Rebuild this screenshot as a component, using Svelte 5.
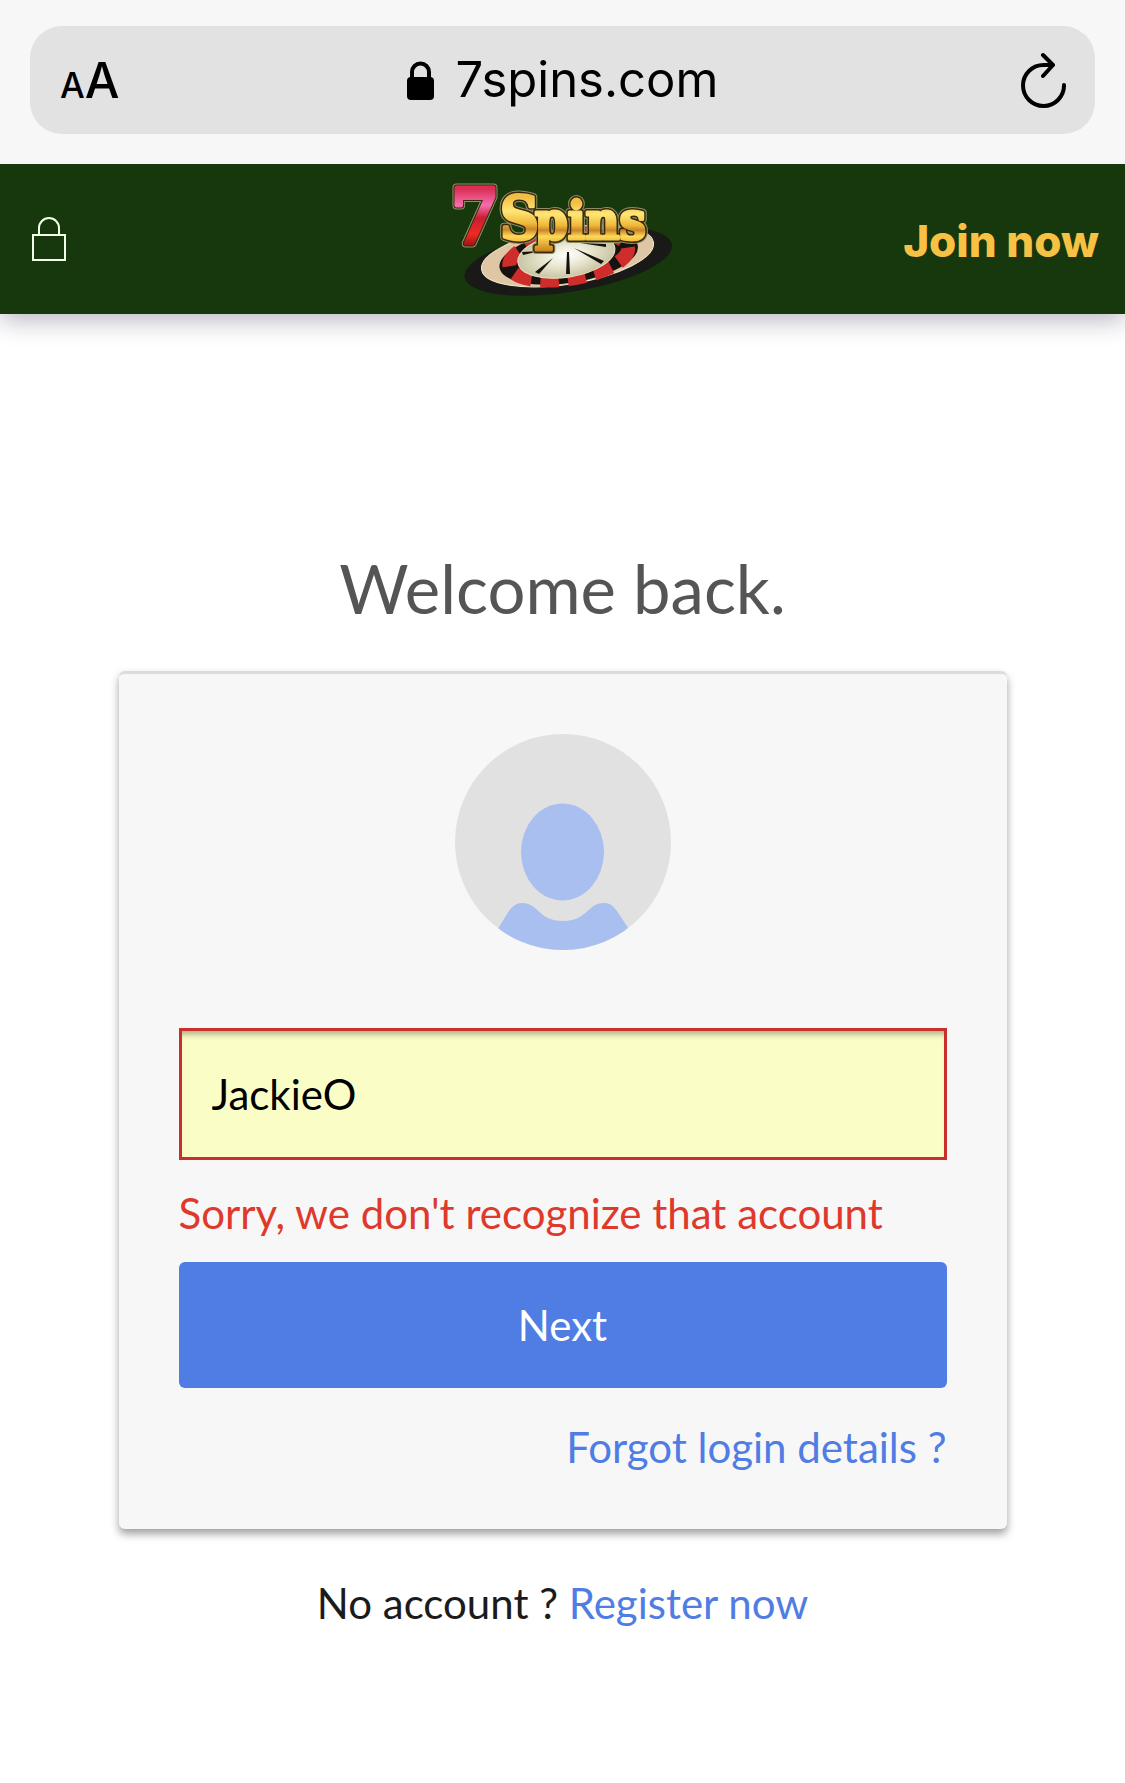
<script>
  let username = $state('JackieO');
</script>

<div class="browser">
  <div class="address">
    <button class="reader" aria-label="Text size"><span class="small">A</span><span>A</span></button>
    <div class="site">
      <svg width="27" height="39" viewBox="0 0 27 39" aria-hidden="true">
        <path d="M5 18V11a8.500 8.500 0 0 1 17 0v7" fill="none" stroke="#000" stroke-width="4" />
        <rect y="16" width="27" height="23" rx="4" />
      </svg>
      <span>7spins.com</span>
    </div>
    <button class="reload" aria-label="Reload">
      <svg width="46" height="56" viewBox="0 0 46 56" fill="none" stroke="#000" stroke-width="4" stroke-linecap="round" stroke-linejoin="round">
        <path d="M32 13H23A20.500 20.500 0 1 0 43 33M22 3 32 13 22 24" />
      </svg>
    </button>
  </div>
</div>

<header>
  <a class="login" href="#login" aria-label="Log in">
    <svg width="34" height="44" viewBox="0 0 34 44" fill="none" stroke="#f2ffe9" stroke-width="2">
      <path d="M1 18H33V43H1ZM7 18V11a10 10 0 0 1 20 0v7" />
    </svg>
  </a>
  <a class="logo" href="#home" aria-label="7Spins">
    <svg width="234" height="142" viewBox="16 4 234 142">
      <defs>
        <linearGradient id="gold" x1="0" y1="0" x2="0" y2="1">
          <stop offset="0.2" stop-color="#f0bd45" />
          <stop offset="0.4" stop-color="#ffe675" />
          <stop offset="0.58" stop-color="#eeb93a" />
          <stop offset="0.66" stop-color="#c9852a" />
          <stop offset="0.76" stop-color="#ffd955" />
          <stop offset="1" stop-color="#c98420" />
        </linearGradient>
        <linearGradient id="seven" x1="0" y1="0" x2="0" y2="1">
          <stop offset="0.2" stop-color="#d92f55" />
          <stop offset="0.38" stop-color="#f56fae" />
          <stop offset="0.52" stop-color="#c81d35" />
          <stop offset="0.7" stop-color="#f02a20" />
          <stop offset="0.84" stop-color="#96101a" />
        </linearGradient>
        <radialGradient id="hub">
          <stop offset="0" stop-color="#ffffff" />
          <stop offset="0.5" stop-color="#e9e6cf" />
          <stop offset="1" stop-color="#c9c4a4" />
        </radialGradient>
      </defs>
      <g transform="rotate(-9 138 95)">
        <ellipse cx="138" cy="97" rx="105" ry="31" fill="#191a18" />
        <ellipse cx="138" cy="92" rx="87" ry="28" fill="#dfc6a4" stroke="#f4e8cd" stroke-width="1" />
        <ellipse cx="139" cy="93" rx="70" ry="26" fill="#17120f" />
        <ellipse cx="139" cy="93" rx="60" ry="22" fill="none" stroke="#cf2c2c" stroke-width="14" pathLength="240" stroke-dasharray="16 8" />
        <ellipse cx="137" cy="91" rx="49" ry="22" fill="url(#hub)" stroke="#efe6c4" stroke-width="1" />
      </g>
      <path d="M137 88 136 110h4L139 88ZM144 84 171 100 174 97ZM123 94 105 108l4 2ZM150 79 176 80v3ZM110 87 92 88l1 3Z" fill="#15120d" />
      <g font-family="DejaVu Serif Condensed, DejaVu Serif, serif" font-weight="700" stroke-linejoin="round" paint-order="stroke">
        <g stroke="#8c9068" stroke-width="8">
          <text x="70" y="75" font-size="60">S</text>
          <text x="105" y="75" font-size="52">pins</text>
          <text x="21" y="79" font-size="77">7</text>
        </g>
        <g stroke="#3b280b" stroke-width="6">
          <text x="70" y="75" font-size="60">S</text>
          <text x="105" y="75" font-size="52">pins</text>
          <text x="21" y="79" font-size="77">7</text>
        </g>
        <g stroke="url(#gold)" stroke-width="3" fill="url(#gold)">
          <text x="70" y="75" font-size="60">S</text>
          <text x="105" y="75" font-size="52">pins</text>
        </g>
        <text x="21" y="79" font-size="77" stroke="url(#seven)" stroke-width="4" fill="url(#seven)">7</text>
      </g>
    </svg>
  </a>
  <a class="join" href="#join">Join now</a>
</header>

<main>
  <h1>Welcome back.</h1>
  <form class="card" onsubmit={(e) => e.preventDefault()}>
    <svg class="avatar" width="216" height="216" viewBox="0 0 216 216" aria-hidden="true">
      <clipPath id="disc"><circle cx="108" cy="108" r="108" /></clipPath>
      <g clip-path="url(#disc)">
        <rect width="216" height="216" fill="#e1e1e1" />
        <ellipse cx="107.500" cy="118" rx="41.500" ry="48.500" fill="#a8bff0" />
        <path d="M36 206 52 180C57 172 61 169 67 169C84 169 83 187 108 187C133 187 132 169 149 169C155 169 159 172 164 180L181 206V216H36Z" fill="#a8bff0" />
      </g>
    </svg>
    <input type="text" aria-label="Username" aria-invalid="true" aria-describedby="login-error" bind:value={username} />
    <p class="error" id="login-error">Sorry, we don't recognize that account</p>
    <button class="next" type="submit">Next</button>
    <a class="forgot" href="#forgot">Forgot login details ?</a>
  </form>
  <p class="register">No account ? <a href="#register">Register now</a></p>
</main>

<style>
  :global(body) {
    margin: 0;
    background: #fff;
    font-family: Lato, 'Open Sans', sans-serif;
    font-size: 42px;
    line-height: 62px;
    color: #1b1b1b;
  }
  button {
    padding: 0;
    border: 0;
    background: none;
    color: inherit;
    font: inherit;
    cursor: pointer;
  }
  a {
    color: #507de3;
    text-decoration: none;
  }
  svg {
    display: block;
  }
  .browser {
    position: relative;
    z-index: 1;
    padding: 26px 30px 30px;
    background: #f7f7f7;
    font-family: Inter, sans-serif;
    font-size: 49px;
    color: #000;
  }
  .address {
    display: grid;
    grid-template-columns: 1fr auto 1fr;
    align-items: center;
    height: 108px;
    padding: 0 28px;
    border-radius: 32px;
    background: #e2e2e2;
  }
  .reader {
    justify-self: start;
    padding: 2px 0 0 2px;
    font-weight: 500;
  }
  .small {
    font-size: 35px;
    line-height: 1;
  }
  .site {
    display: flex;
    align-items: center;
    gap: 22px;
  }
  .reload {
    justify-self: end;
  }
  header {
    display: grid;
    grid-template-columns: 1fr auto 1fr;
    align-items: center;
    height: 150px;
    background: #17370d;
    box-shadow: 0 6px 24px rgba(20, 10, 40, 0.3);
  }
  .login {
    justify-self: start;
    margin-left: 32px;
  }
  .join {
    justify-self: end;
    margin-right: 26px;
    padding-top: 4px;
    font-family: Inter, Lato, sans-serif;
    font-size: 44px;
    font-weight: 800;
    color: #f7c143;
  }
  main {
    display: flex;
    flex-direction: column;
    align-items: center;
    padding: 234px 24px 120px;
  }
  h1 {
    margin: 0 0 43px;
    font-size: 67px;
    line-height: 80px;
    font-weight: 400;
    color: #555;
  }
  .card {
    box-sizing: border-box;
    display: flex;
    flex-direction: column;
    width: 100%;
    max-width: 888px;
    padding: 60px 60px 51px;
    border-top: 3px solid #dcdcdc;
    border-radius: 6px;
    background: #f7f7f7;
    box-shadow: 0 5px 8px rgba(0, 0, 0, 0.38);
  }
  .avatar {
    align-self: center;
    margin-bottom: 78px;
  }
  input {
    box-sizing: border-box;
    width: 100%;
    height: 132px;
    padding: 0 30px;
    border: 3px solid #c9302c;
    border-radius: 0;
    outline: none;
    background: #fafdc5;
    box-shadow: inset 0 8px 6px -5px rgba(0, 0, 0, 0.32);
    font: inherit;
    color: #000;
  }
  p {
    margin: 0;
  }
  .error {
    margin: 22px 0 18px;
    color: #df392c;
  }
  .next {
    height: 126px;
    border-radius: 6px;
    background: #507de3;
    color: #fff;
  }
  .forgot {
    align-self: flex-end;
    margin-top: 28px;
  }
  .register {
    margin-top: 43px;
  }
</style>
